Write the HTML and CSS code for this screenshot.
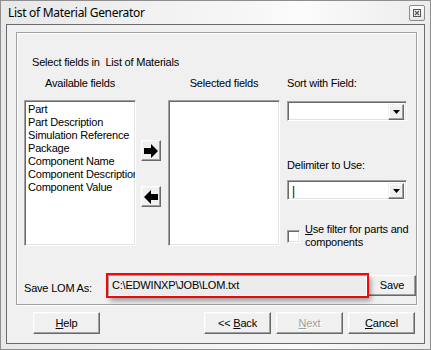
FILE: index.html
```html
<!DOCTYPE html>
<html lang="en">
<head>
  <meta charset="UTF-8">
  <title>List of Material Generator</title>
  <link rel="stylesheet" href="styles.css">
</head>
<body>
  <div class="window">
    <div class="titlebar">
      <span class="title">List of Material Generator</span>
      <span class="close">
        <svg width="14" height="14" viewBox="0 0 14 14">
          <rect x="3.5" y="3.5" width="7" height="7" fill="none" stroke="#555" stroke-width="1"/>
          <path d="M5 5 L9 9 M9 5 L5 9" stroke="#555" stroke-width="1.2"/>
        </svg>
      </span>
    </div>

    <div class="client">
      <div class="group">
        <div class="intro">Select fields in&nbsp; List of Materials</div>

        <div class="fields">
          <div class="col col-list">
            <div class="col-head center">Available fields</div>
            <ul class="listbox">
              <li>Part</li>
              <li>Part Description</li>
              <li>Simulation Reference</li>
              <li>Package</li>
              <li>Component Name</li>
              <li>Component Description</li>
              <li>Component Value</li>
            </ul>
          </div>

          <div class="col col-movers">
            <div class="col-head"></div>
            <button class="btn mover" title="Add">
              <svg width="14" height="14" viewBox="0 0 14 14"><polygon points="0,4 7,4 7,0 14,7 7,14 7,10 0,10" fill="#000"/></svg>
            </button>
            <button class="btn mover mover-back" title="Remove">
              <svg width="14" height="14" viewBox="0 0 14 14"><polygon points="14,4 7,4 7,0 0,7 7,14 7,10 14,10" fill="#000"/></svg>
            </button>
          </div>

          <div class="col col-list col-selected">
            <div class="col-head center">Selected fields</div>
            <ul class="listbox"></ul>
          </div>

          <div class="col col-options">
            <div class="col-head">Sort with Field:</div>
            <div class="combo combo-sort">
              <span class="combo-value"></span>
              <span class="combo-drop"><svg width="7" height="4" viewBox="0 0 7 4"><polygon points="0,0 7,0 3.5,4" fill="#000"/></svg></span>
            </div>
            <div class="opt-label">Delimiter to Use:</div>
            <div class="combo combo-delim">
              <span class="combo-value">|</span>
              <span class="combo-drop"><svg width="7" height="4" viewBox="0 0 7 4"><polygon points="0,0 7,0 3.5,4" fill="#000"/></svg></span>
            </div>
            <label class="check">
              <span class="check-box"></span>
              <span class="check-text"><u>U</u>se filter for parts and<br>components</span>
            </label>
          </div>
        </div>

        <div class="save-row">
          <span class="save-label">Save LOM As:</span>
          <div class="path-field">C:\EDWINXP\JOB\LOM.txt</div>
          <button class="btn save-btn"><span>Save</span></button>
        </div>
      </div>

      <div class="actions">
        <button class="btn action help"><span><u>H</u>elp</span></button>
        <button class="btn action back"><span>&lt;&lt; <u>B</u>ack</span></button>
        <button class="btn action next" disabled><span><u>N</u>ext</span></button>
        <button class="btn action cancel"><span><u>C</u>ancel</span></button>
      </div>
    </div>
  </div>
</body>
</html>
```

FILE: styles.css
```css
* {
  box-sizing: border-box;
}

body {
  margin: 0;
  background: #fff;
  font-family: "Liberation Sans", Arial, sans-serif;
  font-size: 11px;
  line-height: 13px;
  letter-spacing: -0.2px;
  color: #000;
}

.window {
  width: 431px;
  height: 350px;
  border: 1px solid #8e8e8e;
  padding: 0 5px 5px;
  display: flex;
  flex-direction: column;
  background: linear-gradient(to right, #e8e8e8, #f6f6f6 55%, #fbfbfb 70%, #ececec);
}

.titlebar {
  height: 23px;
  display: flex;
  justify-content: space-between;
  align-items: flex-start;
}

.title {
  font-family: "Noto Sans", "Open Sans", sans-serif;
  font-size: 12px;
  line-height: 16px;
  letter-spacing: -0.3px;
  padding: 4px 0 0 2px;
  color: #000;
}

.close {
  width: 16px;
  height: 16px;
  margin-top: 4px;
  border: 1px solid #8a8a8a;
  border-radius: 2px;
  background: linear-gradient(#fdfdfd, #e6e6e6);
  display: flex;
  align-items: center;
  justify-content: center;
}

.client {
  flex: 1;
  border: 1px solid #6b6b6b;
  background: #f0f0f0;
  padding: 7px 7px 9px 9px;
  display: flex;
  flex-direction: column;
}

/* etched group box */
.group {
  height: 273px;
  border: 1px solid #a0a0a0;
  box-shadow: inset 1px 1px 0 #fff, 1px 1px 0 #fff;
  padding: 23px 0 11px 7px;
}

.intro {
  padding-left: 8px;
}

.fields {
  display: flex;
  margin-top: 8px;
}

.col {
  display: flex;
  flex-direction: column;
}

.col-head {
  height: 23px;
  white-space: nowrap;
}

.center {
  text-align: center;
}

.col-list {
  width: 112px;
}

.col-movers {
  width: 20px;
  margin-left: 5px;
}

.col-selected {
  margin-left: 7px;
}

.col-options {
  width: 125px;
  margin-left: 7px;
}

/* sunken controls */
.listbox,
.combo,
.check-box,
.path-field {
  border: 1px solid;
  border-color: #a0a0a0 #fff #fff #a0a0a0;
  box-shadow: inset 1px 1px 0 #696969, inset -1px -1px 0 #e3e3e3;
}

.listbox {
  height: 146px;
  margin: 0;
  padding: 2px 2px 2px 3px;
  list-style: none;
  background: #fff;
  overflow: hidden;
  white-space: nowrap;
}

/* raised buttons */
.btn {
  font-family: inherit;
  font-size: 11px;
  line-height: 13px;
  letter-spacing: inherit;
  color: #000;
  padding: 0;
  background: #f0f0f0;
  border: 1px solid;
  border-color: #fff #696969 #696969 #fff;
  box-shadow: inset -1px -1px 0 #a0a0a0, inset 1px 1px 0 #f4f4f4;
  display: flex;
  align-items: center;
  justify-content: center;
}

.mover {
  width: 20px;
  height: 21px;
  margin-top: 40px;
}

.mover-back {
  margin-top: 25px;
}

.combo {
  width: 120px;
  height: 20px;
  background: #fff;
  display: flex;
  justify-content: space-between;
  padding: 2px;
}

.combo-sort {
  margin-top: 1px;
}

.combo-value {
  padding-left: 2px;
  font-size: 12px;
  line-height: 16px;
}

.combo-drop {
  width: 16px;
  height: 16px;
  background: #f0f0f0;
  border: 1px solid;
  border-color: #f0f0f0 #696969 #696969 #f0f0f0;
  box-shadow: inset -1px -1px 0 #a0a0a0, inset 1px 1px 0 #fff;
  display: flex;
  align-items: center;
  justify-content: center;
}

.opt-label {
  margin-top: 38px;
}

.combo-delim {
  margin-top: 8px;
}

.check {
  display: flex;
  align-items: center;
  margin-top: 23px;
  white-space: nowrap;
}

.check-box {
  width: 13px;
  height: 13px;
  background: #fff;
  flex: none;
}

.check-text {
  margin-left: 5px;
}

.save-row {
  display: flex;
  align-items: flex-start;
  margin-top: 26px;
  height: 21px;
}

.save-label {
  width: 84px;
  padding-top: 7px;
}

/* red highlight drawn over the path field */
.path-field {
  position: relative;
  z-index: 1;
  width: 259px;
  height: 21px;
  padding: 3px 0 0 3px;
  background: #ececec;
  box-shadow: 0 0 0 2px #ee0a0a, 3px 4px 5px 1px rgba(0, 0, 0, 0.35);
}

.save-btn {
  width: 48px;
  height: 21px;
  margin-left: 1px;
}

.actions {
  display: flex;
  margin-top: 7px;
}

.action {
  width: 67px;
  height: 22px;
}

.help {
  margin-left: 17px;
}

.back {
  margin-left: auto;
}

.next,
.cancel {
  margin-left: 5px;
}

.cancel {
  margin-right: 2px;
}

.next {
  color: #a0a0a0;
  text-shadow: 1px 1px 0 #fff;
}
```
